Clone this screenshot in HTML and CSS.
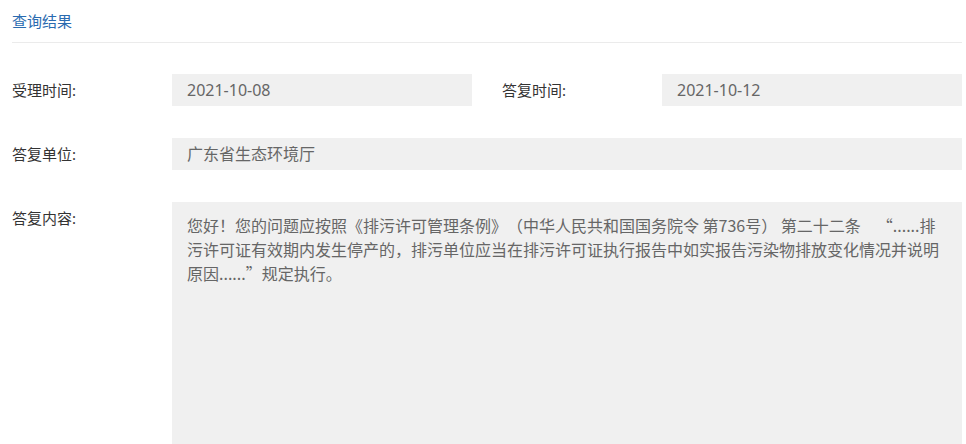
FILE: index.html
```html
<!DOCTYPE html>
<html lang="zh-CN">

<head>
  <meta charset="UTF-8">
  <meta name="viewport" content="width=device-width, initial-scale=1.0">
  <title>查询结果</title>
  <link rel="stylesheet" href="styles.css">
</head>

<body>
  <div class="result">
    <div class="result-title">查询结果</div>

    <div class="result-form">
      <div class="label">受理时间:</div>
      <div class="value">2021-10-08</div>
      <div class="label label-right">答复时间:</div>
      <div class="value">2021-10-12</div>

      <div class="label">答复单位:</div>
      <div class="value value-wide">广东省生态环境厅</div>

      <div class="label">答复内容:</div>
      <div class="value value-wide value-text">您好！您的问题应按照《排污许可管理条例》（中华人民共和国国务院令 第736号） 第二十二条　“......排污许可证有效期内发生停产的，排污单位应当在排污许可证执行报告中如实报告污染物排放变化情况并说明原因......”规定执行。</div>
    </div>
  </div>
</body>

</html>
```

FILE: styles.css
```css
body {
  margin: 0;
  font-family: "Noto Sans", "Noto Sans CJK SC", sans-serif;
  background-color: #fff;
}

.result {
  padding: 0 4px 0 12px;
}

/* 标题 + 分割线 */
.result-title {
  height: 42px;
  line-height: 42px;
  font-size: 15px;
  color: #2a6bb0;
  border-bottom: 1px solid #ebebeb;
}

/* 两列：标签 + 灰底值 */
.result-form {
  display: grid;
  grid-template-columns: 160px 300px 190px 300px;
  row-gap: 32px;
  padding-top: 31px;
}

.label {
  font-size: 15px;
  line-height: 32px;
  color: #333;
}

.label-right {
  padding-left: 30px;
}

.value {
  background-color: #f0f0f0;
  height: 32px;
  line-height: 32px;
  padding: 0 15px;
  font-size: 16px;
  color: #666;
  box-sizing: border-box;
}

.value-wide {
  grid-column: 2 / 5;
}

/* 中文字体优先，引号为全角；标点不挤压 */
.value-text {
  height: 260px;
  line-height: 24px;
  padding-top: 11px;
  font-family: "Noto Sans CJK SC", sans-serif;
  text-spacing-trim: space-all;
}
```
